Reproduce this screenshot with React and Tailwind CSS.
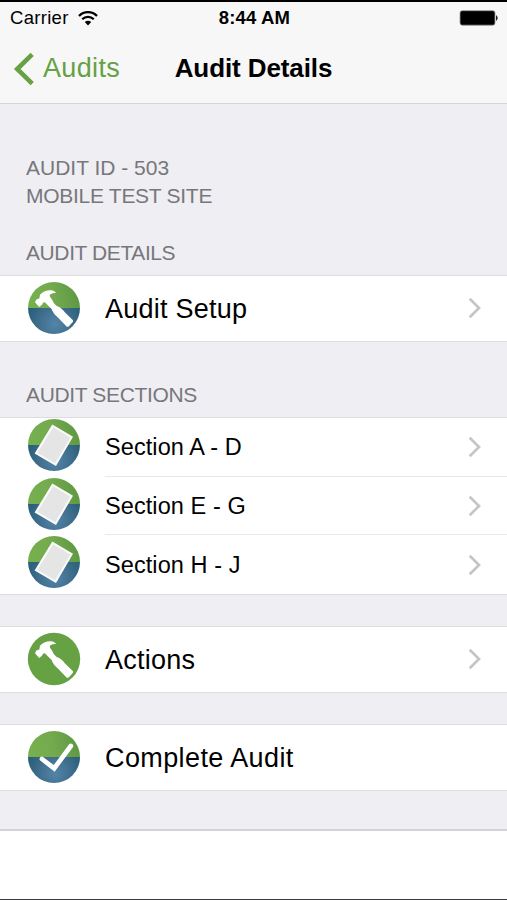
import React from 'react';

function Chevron() {
  return (
    <svg className="ml-auto mr-[25px] h-6 w-4 shrink-0" viewBox="0 0 16 24" fill="none" stroke="#c5c5c9" strokeWidth="2.7">
      <path d="M3.7 2.7 L13 12 L3.7 21.3" />
    </svg>
  );
}

function Badge({ id, kind, solid }) {
  return (
    <svg className="ml-[27px] h-[54px] w-[54px] shrink-0" viewBox="0 0 54 54">
      <defs>
        <linearGradient id={id + 'g'} x1="0" y1="0.3" x2="1" y2="0.2">
          <stop offset="0" stopColor="#76b04e" />
          <stop offset="0.45" stopColor="#73aa4f" />
          <stop offset="1" stopColor="#5d9641" />
        </linearGradient>
        <radialGradient id={id + 'b'} gradientUnits="userSpaceOnUse" cx="28" cy="43" r="27">
          <stop offset="0" stopColor="#5385a9" />
          <stop offset="0.55" stopColor="#41708f" />
          <stop offset="1" stopColor="#2c617c" />
        </radialGradient>
      </defs>
      {solid ? (
        <circle cx="27" cy="27" r="26.2" fill="#66a144" />
      ) : (
        <>
          <path d="M1 27 A26 26 0 0 1 53 27 Z" fill={`url(#${id}g)`} />
          <path d="M1 27 A26 26 0 0 0 53 27 Z" fill={`url(#${id}b)`} />
        </>
      )}
      {kind === 'hammer' && (
        <path
          fill="#fff"
          d="M8 21.3 L9.3 18.6 L12.3 17.6 L13 13.8 C15.3 10.6 20 8.8 24.1 9.2 C26.4 9.5 28.4 10.4 29 12 C25.6 11.7 23 12.8 22.7 14.6 C22.7 16.4 24.8 17.6 25.7 19.8 C26.3 21.8 27.8 23.4 29.8 25 C33.2 26 35.6 28.5 38 31.4 L46 39.3 L46 40.8 L41.4 45.8 L39.8 45.8 L31.4 37 C28 34.2 25.6 31.2 24.6 28 L17.8 21.2 C16.4 21 15.4 22 15.2 23.5 L12.2 26 Z"
        />
      )}
      {kind === 'sheet' && (
        <>
          <path d="M25.3 6.5 L46 18.8 L29 48 L7.6 35.4 Z" fill="#fbfbfb" />
          <path d="M26.2 9.2 L43.4 19.5 L28.2 45.3 L10.4 34.8 Z" fill="#e5e5e6" />
        </>
      )}
      {kind === 'check' && (
        <path d="M15 29 L27.2 38.4 L43.8 16" fill="none" stroke="#fff" strokeWidth="4.7" strokeLinecap="round" />
      )}
    </svg>
  );
}

function Row({ id, kind, solid, text, arrow = true, className, textClass = '' }) {
  return (
    <div className={`flex items-center border-y border-[#dddde0] bg-white pb-[2px] ${className}`}>
      <Badge id={id} kind={kind} solid={solid} />
      <span className={`ml-6 whitespace-nowrap pt-[3px] text-[27px] leading-8 ${textClass}`}>{text}</span>
      {arrow && <Chevron />}
    </div>
  );
}

function SectionRow({ id, text, last }) {
  return (
    <div className="flex flex-1">
      <div className="shrink-0">
        <Badge id={id} kind="sheet" />
      </div>
      <div className={`ml-6 flex flex-1 items-center ${last ? '' : 'border-b border-[#e9e9eb]'}`}>
        <span className="whitespace-nowrap text-[23.5px] leading-7 tracking-[0.08px]">{text}</span>
        <Chevron />
      </div>
    </div>
  );
}

export default function App() {
  return (
    <div className="flex h-[900px] w-[507px] flex-col overflow-hidden border-b border-[#3a3a3c] bg-white font-['Liberation_Sans',Arial,sans-serif] text-black">
      <header className="h-[104px] shrink-0 border-b border-t-2 border-b-[#d5d5d8] border-t-black bg-[#f7f7f7]">
        <div className="grid h-8 grid-cols-3 items-center pl-[10px] pr-2">
          <div className="flex items-center gap-[9px]">
            <span className="text-[18.5px] tracking-[0.3px]">Carrier</span>
            <svg className="h-[15px] w-5" viewBox="0 0 20 15" fill="none" stroke="#000" strokeWidth="2.3">
              <path d="M1 5 C6 -.1 14 -.1 19 5" />
              <path d="M4.2 8.3 C7.5 5 12.5 5 15.8 8.3" />
              <path d="M6.8 11.1 Q10 8.5 13.2 11.1 L10 14.5 Z" fill="#000" stroke="none" />
            </svg>
          </div>
          <span className="text-center text-[18.5px] font-bold tracking-[0.15px]">8:44 AM</span>
          <svg className="ml-auto h-4 w-10" viewBox="0 0 40 16">
            <rect x="1" y=".7" width="35" height="14.5" rx="2.2" fill="#000" stroke="#999" strokeWidth=".8" />
            <path d="M37 5 Q40.5 8 37 11 Z" fill="#222" />
          </svg>
        </div>
        <div className="grid h-[69px] grid-cols-[1fr_auto_1fr] items-center">
          <div className="flex items-center text-[#66a144]">
            <svg className="ml-[13px] h-[34px] w-[22px]" viewBox="0 0 22 34" fill="none" stroke="currentColor" strokeWidth="4.6">
              <path d="M19.2 2.4 L4.2 17 L19.2 31.6" />
            </svg>
            <span className="ml-2 text-[27px] tracking-[0.35px]">Audits</span>
          </div>
          <h1 className="text-[26px] font-bold tracking-[-0.1px]">Audit Details</h1>
        </div>
      </header>
      <main className="flex h-[727px] shrink-0 flex-col border-b-2 border-[#d4d4d7] bg-[#efeef3]">
        <div className="flex h-[171px] shrink-0 flex-col pl-[26px] pt-[50px] text-[21px] leading-[28px] text-[#77777b]">
          <p>AUDIT ID - 503</p>
          <p className="tracking-[-0.28px]">MOBILE TEST SITE</p>
          <p className="mt-[29px] tracking-[-0.4px]">AUDIT DETAILS</p>
        </div>
        <Row id="setup" kind="hammer" text="Audit Setup" className="h-[67px]" textClass="tracking-[0.25px]" />
        <div className="h-[75px] pl-[26px] pt-[39px] text-[21px] leading-[28px] tracking-[-0.35px] text-[#77777b]">AUDIT SECTIONS</div>
        <div className="flex h-[178px] flex-col border-y border-[#dddde0] bg-white">
          <SectionRow id="ad" text="Section A - D" />
          <SectionRow id="eg" text="Section E - G" />
          <SectionRow id="hj" text="Section H - J" last />
        </div>
        <Row id="actions" kind="hammer" solid text="Actions" className="mt-[31px] h-[67px]" textClass="tracking-[0.25px]" />
        <Row id="complete" kind="check" text="Complete Audit" arrow={false} className="mt-[31px] h-[67px]" textClass="tracking-[0.4px]" />
      </main>
    </div>
  );
}
